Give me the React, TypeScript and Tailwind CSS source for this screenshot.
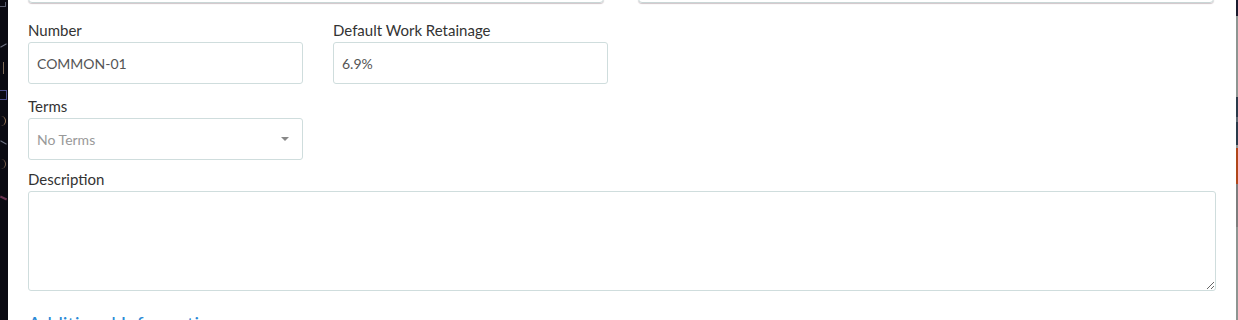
import React from 'react';

const labelCls = 'block h-5 text-[15px] leading-5 text-[#333] mb-[2px]';
const inputCls =
  'h-[42px] w-full rounded-[3px] border border-[#cfdddd] bg-white px-2 text-[14px] text-[#555] outline-none';

function Field({ label, value }: { label: string; value: string }) {
  return (
    <div className="w-[275px]">
      <label className={labelCls}>{label}</label>
      <input className={inputCls} defaultValue={value} readOnly />
    </div>
  );
}

function SideStrip() {
  return (
    <div className="flex w-2 shrink-0 flex-col items-start gap-[16px] overflow-hidden bg-[#0a0a12] pt-[2px]">
      <div className="h-[5px] w-[6px] border-r border-b border-[#5a5e70]" />
      <div className="mt-[22px] h-[1px] w-[7px] rotate-[-30deg] bg-[#6f7384]" />
      <div className="h-[12px] w-[4px] border-r border-[#7d6a58]" />
      <div className="h-[10px] w-[7px] border-r border-t border-b border-[#4b4f8a]" />
      <div className="h-[10px] w-[6px] rounded-r-full border-r border-[#9a7a5b]" />
      <div className="h-[1px] w-[7px] rotate-[30deg] bg-[#6f7384]" />
      <div className="h-[10px] w-[6px] rounded-r-full border-r border-[#7a6150]" />
      <div className="mt-3 h-[2px] w-[7px] rotate-[25deg] bg-[#6a3350]" />
    </div>
  );
}

function RightStrip() {
  return (
    <div className="flex w-[2px] shrink-0 flex-col bg-[#8d9592]">
      <div className="h-4 bg-[#1b1b2e]" />
      <div className="h-[81px] bg-[#8d9592]" />
      <div className="h-[20px] bg-[#2a3a4a]" />
      <div className="h-[5px] bg-[#5a6670]" />
      <div className="h-[23px] bg-[#2a3a4a]" />
      <div className="h-[3px] bg-[#8d9592]" />
      <div className="h-[36px] bg-[#b0461a]" />
      <div className="h-[43px] bg-[#7d7d7d]" />
      <div className="flex-1 bg-[#8d9592]" />
    </div>
  );
}

export default function App() {
  return (
    <div className="flex h-[320px] w-[1238px] overflow-hidden bg-white font-['Lato','Open_Sans',sans-serif]">
      <SideStrip />
      <div className="flex-1 px-5">
        <div className="-mt-[37px] flex gap-[34px]">
          <div className="h-10 w-[576px] rounded-[4px] border border-[#c9d6d6] shadow-[0_1px_1px_rgba(120,90,100,0.35)]" />
          <div className="h-10 w-[576px] rounded-[4px] border border-[#c9d6d6] shadow-[0_1px_1px_rgba(120,90,100,0.35)]" />
        </div>

        <div className="mt-[17px] flex gap-[30px]">
          <Field label="Number" value="COMMON-01" />
          <Field label="Default Work Retainage" value="6.9%" />
        </div>

        <div className="mt-3 w-[275px]">
          <label className={labelCls}>Terms</label>
          <div className="flex h-[42px] items-center justify-between rounded-[3px] border border-[#cfdddd] px-2 text-[14px] text-[#999]">
            <span>No Terms</span>
            <span className="mr-[5px] h-0 w-0 border-x-[4px] border-t-[4px] border-x-transparent border-t-[#888]" />
          </div>
        </div>

        <div className="mt-[9px]">
          <label className={labelCls}>Description</label>
          <textarea className="block h-[100px] w-[1188px] rounded-[3px] border border-[#cfdddd] px-2 py-1 text-[14px] text-[#555] outline-none" />
        </div>

        <div className="mt-[21px] text-[19.5px] leading-6 text-[#2b8ad6]">Additional Information</div>
      </div>
      <RightStrip />
    </div>
  );
}
